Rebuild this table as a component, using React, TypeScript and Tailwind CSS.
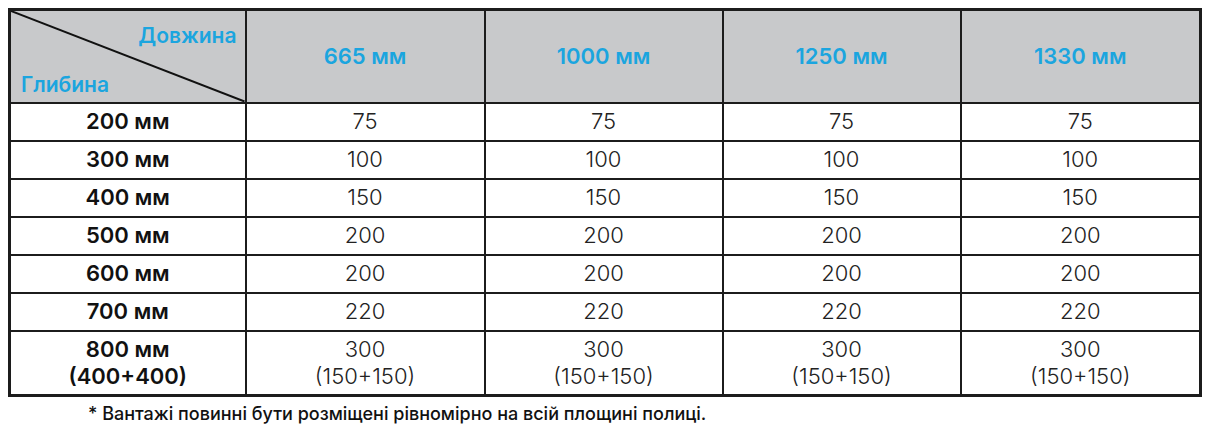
const widths = ["665 мм", "1000 мм", "1250 мм", "1330 мм"]

const rows: { depth: string[]; load: string[] }[] = [
  { depth: ["200 мм"], load: ["75"] },
  { depth: ["300 мм"], load: ["100"] },
  { depth: ["400 мм"], load: ["150"] },
  { depth: ["500 мм"], load: ["200"] },
  { depth: ["600 мм"], load: ["200"] },
  { depth: ["700 мм"], load: ["220"] },
  { depth: ["800 мм", "(400+400)"], load: ["300", "(150+150)"] },
]

export default function App() {
  return (
    <div className="w-[1209px] h-[431px] bg-white pt-[8px] pl-[8px] font-['Inter','Liberation_Sans',sans-serif] text-[#111]">
      <table className="border-collapse border-[3px] border-[#1c1c1c] table-fixed w-[1191px]">
        <colgroup>
          <col className="w-[236px]" />
          <col className="w-[239px]" />
          <col className="w-[238px]" />
          <col className="w-[238px]" />
          <col className="w-[240px]" />
        </colgroup>
        <thead>
          <tr className="h-[93px] bg-[#c8c9cb]">
            <th className="relative border-2 border-[#1c1c1c] p-0">
              <svg className="absolute inset-0 h-full w-full" preserveAspectRatio="none" viewBox="0 0 100 100">
                <line x1="0" y1="0" x2="100" y2="100" stroke="#111" strokeWidth="2" vectorEffect="non-scaling-stroke" />
              </svg>
              <div className="absolute right-[8px] top-[9px] text-[21px] font-semibold text-[#1ba5df]">Довжина</div>
              <div className="absolute left-[10px] bottom-[1px] text-[21px] font-semibold text-[#1ba5df]">Глибина</div>
            </th>
            {widths.map((w) => (
              <th key={w} className="border-2 border-[#1c1c1c] text-[22px] font-semibold text-[#1ba5df]">
                {w}
              </th>
            ))}
          </tr>
        </thead>
        <tbody>
          {rows.map((r, i) => (
            <tr key={i} className={r.depth.length > 1 ? "h-[65px]" : "h-[38px]"}>
              <td className="border-2 border-[#1c1c1c] text-center text-[22px] font-semibold leading-[27px]">
                {r.depth.map((d) => (
                  <div key={d}>{d}</div>
                ))}
              </td>
              {widths.map((w) => (
                <td key={w} className="border-2 border-[#1c1c1c] text-center text-[22px] font-light leading-[27px] text-[#222]">
                  {r.load.map((l) => (
                    <div key={l}>{l}</div>
                  ))}
                </td>
              ))}
            </tr>
          ))}
        </tbody>
      </table>
      <p className="pl-[80px] pt-[3px] text-[18px] font-medium">
        * Вантажі повинні бути розміщені рівномірно на всій площині полиці.
      </p>
    </div>
  )
}
